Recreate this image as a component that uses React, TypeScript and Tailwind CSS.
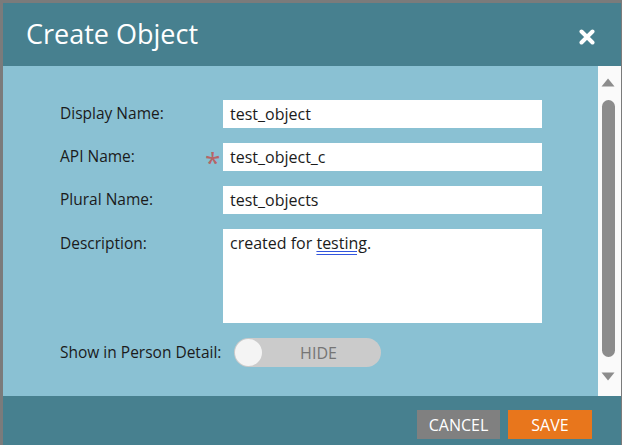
const font = { fontFamily: '"Open Sans", "Noto Sans", sans-serif' }

function Field({ label, value, required }: { label: string; value: string; required?: boolean }) {
  return (
    <div className="flex h-[28px] items-center">
      <div className="w-[145px] text-[15.5px] text-[#1b1b1b]">{label}</div>
      <div className="flex w-[18px] justify-start text-[28px] leading-none text-[#b86466]">{required ? <span className="mt-[10px]">*</span> : null}</div>
      <div className="flex h-[28px] w-[319px] items-center bg-white px-[7px] text-[16px] text-[#1b1b1b]">{value}</div>
    </div>
  )
}

function App() {
  return (
    <div className="h-[445px] w-[622px] overflow-hidden bg-[#7b7b7b] pl-[3px] pr-[1px] pt-[3px]" style={font}>
      <div className="flex h-[442px] flex-col">
        <div className="flex h-[63px] items-center justify-between bg-[#47808f] pl-[23px] pr-[26px]">
          <span className="text-[27px] text-white">Create Object</span>
          <svg width="16" height="16" viewBox="0 0 16 16" className="mt-[5px]">
            <path d="M2.5 2.5 L13.5 13.5 M13.5 2.5 L2.5 13.5" stroke="white" strokeWidth="4" strokeLinecap="round" />
          </svg>
        </div>
        <div className="flex h-[330px]">
          <div className="flex flex-1 flex-col gap-[15px] bg-[#8ac1d3] pl-[57px] pt-[34px]">
            <Field label="Display Name:" value="test_object" />
            <Field label="API Name:" value="test_object_c" required />
            <Field label="Plural Name:" value="test_objects" />
            <div className="flex h-[94px]">
              <div className="w-[163px] pt-[3px] text-[15.5px] text-[#1b1b1b]">Description:</div>
              <div className="h-[94px] w-[319px] bg-white px-[7px] pt-[2px] text-[16px] text-[#1b1b1b]">
                created for <span className="underline decoration-[#3355dd] decoration-double underline-offset-[2px]">testing</span>.
              </div>
            </div>
            <div className="flex h-[29px] items-center">
              <div className="w-[174px] text-[15.5px] text-[#1b1b1b]">Show in Person Detail:</div>
              <div className="flex h-[29px] w-[147px] items-center rounded-full bg-[#cbcbcb] pl-[1px]">
                <div className="h-[27px] w-[27px] rounded-full bg-[#f4f4f4]" />
                <span className="flex-1 pr-[6px] text-center text-[16px] text-[#757575]">HIDE</span>
              </div>
            </div>
          </div>
          <div className="flex w-[23px] flex-col items-center bg-[#fafafa] pr-[3px]">
            <svg width="14" height="9" viewBox="0 0 14 9" className="mt-[12px]">
              <path d="M7 0.5 L13.5 8.5 L0.5 8.5 Z" fill="#8c8c8c" />
            </svg>
            <div className="mt-[13px] h-[257px] w-[13px] rounded-full bg-[#8c8c8c]" />
            <svg width="14" height="9" viewBox="0 0 14 9" className="mt-[15px]">
              <path d="M0.5 0.5 L13.5 0.5 L7 8.5 Z" fill="#8c8c8c" />
            </svg>
          </div>
        </div>
        <div className="flex flex-1 items-start justify-end gap-[8px] bg-[#47808f] pr-[29px] pt-[14px]">
          <button className="h-[29px] w-[83px] bg-[#808080] text-[16px] text-white">CANCEL</button>
          <button className="h-[29px] w-[84px] bg-[#e8761c] text-[16px] text-white">SAVE</button>
        </div>
      </div>
    </div>
  )
}

export default App
